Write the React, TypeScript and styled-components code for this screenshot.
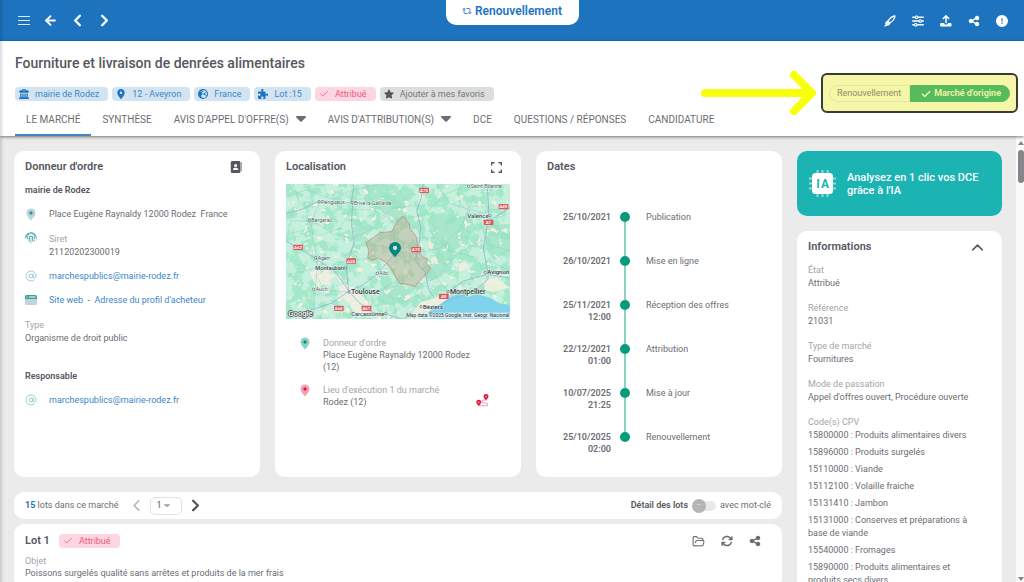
import React from "react";
import styled, { createGlobalStyle } from "styled-components";
import {
  FaAddressBook,
  FaArrowsRotate,
  FaBuildingColumns,
  FaCheck,
  FaCircleExclamation,
  FaEarthEurope,
  FaLocationDot,
  FaPuzzlePiece,
  FaShareNodes,
  FaSliders,
  FaStar,
} from "react-icons/fa6";
import { ArrowLeft, AtSign, Check, ChevronLeft, ChevronRight, ChevronUp, FolderOpen, Repeat2 } from "lucide-react";

const color = {
  blue: "#1e73be",
  link: "#3d85c6",
  text: "#6b6d72",
  strong: "#55575e",
  muted: "#a3a5a8",
  page: "#ebebeb",
  teal: "#1cb3b3",
  green: "#089a79",
};

const GlobalStyle = createGlobalStyle`
  *, *::before, *::after { box-sizing: border-box; }
  body { margin: 0; font-family: Roboto, "Liberation Sans", sans-serif; font-size: 9px; line-height: 13px; color: ${color.text}; }
  button, input, select { font: inherit; color: inherit; }
  button { border: 0; padding: 0; background: none; cursor: pointer; }
  h1, h2, h3, p, ul, ol, dl, dd { margin: 0; padding: 0; }
  ul, ol { list-style: none; }
  svg { display: block; flex: none; }
`;

const Shell = styled.div`
  height: 100vh;
  display: flex;
  flex-direction: column;
  overflow: hidden;
  background: ${color.page};
  &::before {
    content: "";
    position: fixed;
    inset: 0 auto 0 0;
    width: 4px;
    background: linear-gradient(90deg, rgba(0, 0, 0, 0.14), rgba(0, 0, 0, 0));
    z-index: 5;
  }
`;

const TopBar = styled.header`
  flex: none;
  display: grid;
  grid-template-columns: 1fr auto 1fr;
  height: 41px;
  padding: 0 15px 0 16px;
  background: ${color.blue};
  color: #fff;
`;

const IconGroup = styled.div<{ $end?: boolean }>`
  display: flex;
  align-items: center;
  gap: ${(p) => (p.$end ? 13 : 12)}px;
  justify-content: ${(p) => (p.$end ? "flex-end" : "flex-start")};
`;

const IconButton = styled.button<{ $dim?: boolean }>`
  display: flex;
  align-items: center;
  justify-content: center;
  width: 15px;
  height: 16px;
  color: ${(p) => (p.$dim ? "#b3b4b7" : "inherit")};
`;

const ModeTab = styled.div`
  align-self: start;
  display: flex;
  align-items: center;
  gap: 3px;
  height: 25px;
  padding: 0 17px 3px 16px;
  border-radius: 0 0 10px 10px;
  background: #fff;
  color: ${color.blue};
  font-size: 12px;
  font-weight: 600;
`;

const Heading = styled.section`
  flex: none;
  position: relative;
  z-index: 2;
  padding: 14px 15px 0;
  background: #fff;
  box-shadow: 0 1px 3px rgba(0, 0, 0, 0.5);
`;

const Title = styled.h1`
  font-size: 14px;
  line-height: 16px;
  font-weight: 500;
  color: ${color.strong};
`;

const Chips = styled.ul`
  display: flex;
  gap: 4px;
  margin-top: 16px;
`;

const tones = {
  blue: ["#d2e4f2", "#3f86c6"],
  pink: ["#fcd6e0", "#ee5683"],
  grey: ["#dcdddd", "#75777b"],
};

const Chip = styled.span<{ $tone: keyof typeof tones }>`
  display: flex;
  align-items: center;
  gap: 6px;
  height: 14px;
  padding: 0 9px 0 4px;
  border-radius: 4px;
  background: ${(p) => tones[p.$tone][0]};
  color: ${(p) => tones[p.$tone][1]};
  white-space: nowrap;
`;

const Tabs = styled.nav`
  display: flex;
  gap: 22px;
  height: 35px;
`;

const Tab = styled.a<{ $active?: boolean }>`
  display: flex;
  align-items: center;
  gap: 7px;
  padding: 3px ${(p) => (p.$active ? 11 : 0)}px 0;
  margin-right: ${(p) => (p.$active ? -11 : 0)}px;
  border-bottom: 2px solid ${(p) => (p.$active ? "#4a86bd" : "transparent")};
  font-size: 10px;
  color: ${color.text};
  text-decoration: none;
  white-space: nowrap;
`;

const Callout = styled.div`
  position: absolute;
  top: 29px;
  right: 6px;
  display: flex;
  align-items: center;
  gap: 4px;
`;

const CalloutBox = styled.div`
  display: flex;
  padding: 10px 6px 9px;
  border: 2px solid #3b3b32;
  border-radius: 6px;
  background: #f5f6a8;
`;

const Segment = styled.button<{ $on?: boolean }>`
  display: flex;
  align-items: center;
  gap: 3px;
  height: 17px;
  padding: 0 ${(p) => (p.$on ? 8 : 8)}px 0 ${(p) => (p.$on ? 10 : 7)}px;
  border: 1px solid ${(p) => (p.$on ? "#56bb5c" : "#e6e79c")};
  border-radius: ${(p) => (p.$on ? "0 9px 9px 0" : "9px 0 0 9px")};
  background: ${(p) => (p.$on ? "#56bb5c" : "transparent")};
  color: ${(p) => (p.$on ? "#f3f7a9" : "#8e8e66")};
  font-weight: ${(p) => (p.$on ? 600 : 400)};
  white-space: nowrap;
`;

const Body = styled.div`
  flex: 1;
  min-height: 0;
  display: flex;
`;

const Content = styled.div`
  flex: 1;
  min-width: 0;
  display: grid;
  grid-template-columns: minmax(0, 1fr) 205px;
  align-items: start;
  gap: 15px;
  padding: 15px 14px;
  overflow: hidden;
`;

const Scroll = styled.div`
  flex: none;
  width: 8px;
  display: flex;
  flex-direction: column;
  align-items: center;
  justify-content: space-between;
  padding: 5px 0 1px 1px;
  background: #fafbfb;
`;

const Thumb = styled.div`
  width: 6px;
  height: 33px;
  margin-top: 5px;
  border-radius: 3px;
  background: #85868a;
`;

const Column = styled.div`
  display: flex;
  flex-direction: column;
  gap: 15px;
  min-width: 0;
`;

const CardRow = styled.div`
  display: grid;
  grid-template-columns: repeat(3, minmax(0, 1fr));
  gap: 15px;
`;

const Card = styled.section`
  padding: 9px 11px;
  border-radius: 10px;
  background: #fff;
`;

const CardHead = styled.div`
  display: flex;
  align-items: center;
  justify-content: space-between;
  height: 14px;
  padding-right: 6px;
  margin-bottom: 10px;
  color: ${color.strong};
`;

const CardTitle = styled.h2`
  font-size: 11px;
  line-height: 14px;
  font-weight: 600;
  color: ${color.strong};
`;

const Strong = styled.h3`
  font-size: 9px;
  line-height: 13px;
  font-weight: 600;
  color: ${color.strong};
`;

const Label = styled.span`
  display: block;
  color: ${color.muted};
`;

const Lines = styled.ul`
  display: flex;
  flex-direction: column;
  gap: 11px;
  margin: 11px 0;
  ${Label} {
    line-height: 14px;
  }
`;

const Line = styled.li`
  display: flex;
  gap: 12px;
  white-space: pre;
`;

const Link = styled.a`
  color: ${color.link};
  text-decoration: none;
`;

const TypeBlock = styled.p`
  margin: 12px 0 25px;
`;

const MapFrame = styled.div`
  margin-top: 8px;
  svg {
    width: 100%;
    height: auto;
  }
`;

const Places = styled.ul`
  display: flex;
  flex-direction: column;
  gap: 11px;
  margin: 18px 20px 0 13px;
  line-height: 12px;
`;

const Place = styled.li`
  display: flex;
  gap: 12px;
  > div {
    flex: 1;
    max-width: 162px;
  }
  > button {
    margin: auto 0 0 auto;
  }
`;

const Timeline = styled.ol`
  margin: 37px 0 13px 14px;
  line-height: 12px;
`;

const Step = styled.li`
  display: grid;
  grid-template-columns: 50px 10px 1fr;
  height: 44px;
  &:last-child {
    height: 24px;
  }
  time {
    text-align: right;
    font-weight: 600;
  }
`;

const Rail = styled.span`
  display: flex;
  flex-direction: column;
  align-items: center;
  margin-left: 9px;
  width: 10px;
  padding-top: 1px;
  &::before {
    content: "";
    flex: none;
    width: 10px;
    height: 10px;
    border-radius: 50%;
    background: ${color.green};
  }
  &::after {
    content: "";
    width: 2px;
    flex: 1;
    margin-bottom: -1px;
    background: #8bd0c0;
  }
  li:last-child > &::after {
    display: none;
  }
`;

const StepName = styled.span`
  padding-left: 25px;
`;

const AiButton = styled.button`
  display: flex;
  align-items: center;
  gap: 11px;
  height: 65px;
  padding: 0 12px;
  border-radius: 10px;
  background: ${color.teal};
  color: #fff;
  font-size: 11px;
  font-weight: 500;
  text-align: left;
`;

const Facts = styled.dl`
  display: flex;
  flex-direction: column;
  gap: 12px;
  dt {
    color: ${color.muted};
  }
  ul {
    padding-right: 10px;
  }
  li + li {
    margin-top: 4px;
  }
`;

const Lots = styled.div`
  display: flex;
  flex-direction: column;
  gap: 5px;
`;

const LotsBar = styled.div`
  display: flex;
  align-items: center;
  height: 27px;
  padding: 0 11px;
  border-radius: 10px;
  background: #fff;
  b {
    color: ${color.blue};
    font-weight: 700;
  }
`;

const Pager = styled.div`
  display: flex;
  align-items: center;
  gap: 6px;
  margin: 0 auto 0 11px;
  color: ${color.strong};
`;

const PageSelect = styled.label`
  display: grid;
  align-items: center;
  border: 1px solid #e0e1e2;
  border-radius: 5px;
  select,
  svg {
    grid-area: 1 / 1;
  }
  select {
    appearance: none;
    width: 30px;
    height: 16px;
    padding: 0 5px;
    border: 0;
    background: transparent;
  }
  svg {
    margin-left: 13px;
    color: #aeb0b3;
    pointer-events: none;
  }
`;

const Switch = styled.label`
  display: flex;
  align-items: center;
  gap: 4px;
  strong {
    font-weight: 600;
    color: ${color.strong};
  }
  input {
    appearance: none;
    display: flex;
    align-items: center;
    width: 24px;
    height: 10px;
    margin: 0;
    border-radius: 5px;
    background: linear-gradient(90deg, transparent 5px, #e8e9e9 5px);
  }
  input::before {
    content: "–";
    width: 14px;
    height: 14px;
    border-radius: 50%;
    background: #b4b6b6;
    color: #d6d8d8;
    text-align: center;
    line-height: 13px;
  }
`;

const LotHead = styled.div`
  display: flex;
  align-items: center;
  gap: 9px;
  margin-bottom: 6px;
`;

const LotText = styled.p`
  line-height: 12px;
`;

const LotActions = styled.div`
  display: flex;
  gap: 13px;
  margin: 0 9px 0 auto;
`;

const Caret = ({ size = 10 }: { size?: number }) => (
  <svg width={size} height={(size * 6) / 10} viewBox="0 0 10 6" fill="currentColor">
    <path d="M1 0h8c1 0 1.300 1 .7 1.600L5.700 5.600a1 1 0 0 1-1.400 0L.3 1.600C-.3 1 0 0 1 0z" />
  </svg>
);

const MenuIcon = () => (
  <svg width="12" height="12" viewBox="0 0 12 12" stroke="currentColor" strokeWidth="1" opacity=".85">
    <path d="M0 1.500h12M0 5.500h12M0 9.500h12" />
  </svg>
);

const RocketIcon = () => (
  <svg width="12" height="12" viewBox="0 0 24 24" fill="none" stroke="currentColor" strokeWidth="2.600" strokeLinejoin="round" strokeLinecap="round">
    <path d="M22 2c-6 1-10 4-13 9l-1 5 5-1c5-3 8-7 9-13z" />
    <path d="M8 11l-4 3-1 4 5-2M12 16l-2 4-5 1 3-5" fill="currentColor" strokeWidth="1.500" />
    <path d="M8 16l-6 6" />
  </svg>
);

const UploadIcon = () => (
  <svg width="12" height="12" viewBox="0 0 24 24" fill="none" stroke="currentColor" strokeWidth="3" strokeLinecap="round" strokeLinejoin="round">
    <path d="M12 15V2M6.500 7L12 1.800 17.500 7" />
    <path d="M2 17h6c0 2 2 3 4 3s4-1 4-3h6v5H2z" fill="currentColor" strokeWidth="2" />
  </svg>
);

const ExpandIcon = () => (
  <svg width="11" height="11" viewBox="0 0 11 11" fill="none" stroke="currentColor" strokeWidth="1.400">
    <path d="M.7 3.500V.7h2.800M7.500.7h2.800v2.800M10.300 7.500v2.800H7.500M3.500 10.300H.7V7.500" />
  </svg>
);

const PinIcon = ({ tint, dot }: { tint: string; dot: string }) => (
  <svg width="12" height="13" viewBox="0 0 12 13">
    <path d="M6 .5a4.500 4.500 0 0 1 4.500 4.500C10.500 7.500 8 10 6 12.500 4 10 1.500 7.500 1.500 5A4.500 4.500 0 0 1 6 .5z" fill={tint} />
    <circle cx="6" cy="5" r="1.700" fill={dot} />
  </svg>
);

const FingerprintIcon = () => (
  <svg width="12" height="13" viewBox="0 0 24 26" fill="none" strokeLinecap="round" strokeWidth="2.200">
    <path d="M1.500 12a11 11 0 0 1 6-9.500M10 1.700c7-1 12.500 4 12.500 10.300" stroke="#45a7a5" />
    <path d="M5 14v-3a7 7 0 0 1 14-1v3" stroke="#7fbfc3" />
    <path d="M8.500 18v-6a3.500 3.500 0 0 1 7 0v6" stroke="#45a7a5" />
    <path d="M12 12v10M19 18v-2M22.500 16v-1" stroke="#9dcdd3" />
  </svg>
);

const BrowserIcon = () => (
  <svg width="12" height="12" viewBox="0 0 12 12">
    <path d="M0 5h12v4.500a1.500 1.500 0 0 1-1.500 1.500h-9A1.500 1.500 0 0 1 0 9.500z" fill="#c1d4dc" />
    <path d="M1.500 1h9A1.500 1.500 0 0 1 12 2.500V5H0V2.500A1.500 1.500 0 0 1 1.500 1z" fill="#3fa19c" />
    <path d="M1.500 3h1M4 3h6.500" stroke="#fff" strokeWidth="1" />
  </svg>
);

const RouteIcon = () => (
  <svg width="13" height="13" viewBox="0 0 26 26">
    <path d="M20 12h-5a3 3 0 0 0 0 6h6a2.800 2.800 0 0 1 0 5.500H6" fill="none" stroke="#f1a3b4" strokeWidth="2.200" />
    <path d="M20 0a5 5 0 0 1 5 5c0 3-3.500 5.500-5 8-1.500-2.500-5-5-5-8a5 5 0 0 1 5-5zM5.500 11.500a5 5 0 0 1 5 5c0 3-3.500 5.500-5 8-1.500-2.500-5-5-5-8a5 5 0 0 1 5-5z" fill="#e01f45" />
    <circle cx="20" cy="5.200" r="1.400" fill="#fbd5dc" />
    <circle cx="5.500" cy="16.700" r="1.400" fill="#fbd5dc" />
  </svg>
);

const ChipIcon = () => (
  <svg width="27" height="27" viewBox="0 0 27 27">
    <path d="M8.500 0v27M13.500 0v27M18.500 0v27M0 8.500h27M0 13.500h27M0 18.500h27" stroke="#8fd9d9" strokeWidth="2" />
    <rect x="3" y="3" width="21" height="21" rx="3.500" fill="#fff" />
    <g fontFamily="Roboto, sans-serif" fontWeight="700" fontSize="12" textAnchor="middle" fill={color.teal}>
      <text x="9" y="17.500">I</text>
      <text x="16" y="17.500">A</text>
    </g>
  </svg>
);

const ArrowIcon = () => (
  <svg width="117" height="46" viewBox="0 0 117 46" fill="none" stroke="#f7ff0a" strokeWidth="8" strokeLinecap="round" strokeLinejoin="round">
    <path d="M5 23h106M94 5l18 18-18 18" />
  </svg>
);

const towns: [string, number, number, number, boolean][] = [
  ["Saint-Etienne", 602, 142, 16, false],
  ["Périgueux", 153, 188, 16, false],
  ["Brive-la-Gaillarde", 252, 191, 15, false],
  ["Bergerac", 124, 244, 16, false],
  ["Agen", 143, 356, 16, false],
  ["Albi", 328, 403, 16, false],
  ["Auch", 137, 451, 16, false],
  ["Avignon", 652, 400, 18, true],
  ["Toulouse", 243, 459, 21, true],
  ["Montpellier", 540, 458, 21, true],
  ["Béziers", 459, 503, 18, true],
];

const townsBefore: [string, number, number, number][] = [
  ["Valence", 656, 230, 18],
  ["Montauban", 222, 387, 17],
  ["Carcassonne", 343, 524, 17],
];

const shields: [string, number, number][] = [
  ["A75", 462, 148],
  ["A49", 700, 197],
  ["A7", 655, 244],
  ["A62", 84, 319],
  ["A75", 438, 326],
  ["A20", 243, 360],
  ["A9", 521, 466],
  ["A64", 206, 502],
  ["A61", 289, 502],
];

const RegionMap = () => (
  <svg viewBox="48 129 672 405" role="img" aria-label="Carte de l'Aveyron" fontFamily="Roboto, sans-serif">
    <defs>
      <filter id="wood" x="0" y="0" width="100%" height="100%" colorInterpolationFilters="sRGB">
        <feTurbulence type="fractalNoise" baseFrequency="0.03" numOctaves="4" seed="12" />
        <feColorMatrix values="0 0 0 0 0.64  0 0 0 0 0.91  0 0 0 0 0.79  9 0 0 0 -4.200" />
      </filter>
      <filter id="field" x="0" y="0" width="100%" height="100%" colorInterpolationFilters="sRGB">
        <feTurbulence type="fractalNoise" baseFrequency="0.05" numOctaves="3" seed="31" />
        <feColorMatrix values="0 0 0 0 0.95  0 0 0 0 0.94  0 0 0 0 0.88  0 14 0 0 -9.400" />
      </filter>
    </defs>
    <rect x="48" y="129" width="672" height="405" fill="#c6f0de" />
    <rect x="48" y="129" width="672" height="405" filter="url(#wood)" />
    <g fill="#9ae3c3" opacity=".65">
      <path d="M245 235l20-6 25 11 15 30-12 10-8 15-32 10zM290 130l30 4 30-5 30 6 20 24 20 16-14 24 4 36-22 4-18 11-8-20-17-10-14-14-16-1-8-24-22-16zM470 235l20-16 40-4 30 12 40-2 20 40-22 20-6 26-30 10-32 44-24-6-8-16-22-20 10-40z" />
      <path d="M330 440l50-10 60 10-20 20-8 20-62 15-25-20zM640 260l26-10 54 0v90l-30 6-20 14-14-24-8-26zM500 350l40-10 10 30-40 40-30 10-20-16 24-20z" />
    </g>
    <rect x="48" y="129" width="672" height="405" filter="url(#field)" />
    <g fill="#f3f0e2" opacity=".85">
      <path d="M120 396l16-8 20 4 14-10 8 16 12 10-10 12 4 14-22-4-14 8-16-14zM205 440l18-14 14 10 20 4 16 20 18 20 12 30-12 10-18 2-25-14-10-20-18-16zM480 350l15-5 10 15-20 10zM477 300l14 8-4 18-12-8zM565 372l10-8 14 2 10 8-16 12-14 6zM450 484l50-14 25-15 30-10-20 24-20 16-45 25-40 5zM636 420l24-6 20-4 40 30-30 6-20 8-24-6z" />
    </g>
    <path d="M455 534l20-18 28-20 38-28 25-9 32 8 22-7 40 10 30 18 30 4v42z" fill="#7fd3ec" />
    <g fill="none" stroke="#5ebf9c" strokeWidth="2" strokeDasharray="5 3" opacity=".6">
      <path d="M48 280l60-14 40 18 60-20 36-60 70 6 60 30 90-20 60-60 50-20M150 534l20-70-30-60 60-40 90-12M440 290l60 0 40 40 80 20 30 60-20 60M70 129l20 60-40 50M560 129l10 60 60 50 20 70 70 20M380 534l-10-60-30-40" />
    </g>
    <g fill="none" stroke="#93b3cf" strokeWidth="3" strokeLinejoin="round" opacity=".8">
      <path d="M48 218l50-14 46-22 50 8 50-6 8-50M248 186l-4 60 8 60-20 60-2 24 6 60 30 34 40 30 50 8 60 18" />
      <path d="M48 300l40 22 50 32 60 40 38 56-50 36-90 30M460 129l-6 40-14 40 12 50-6 60-10 40 30 36 10 50 16 26M652 135l4 70-6 60-10 60 14 70 0 20-50 40-60 20-50 26-40 30" />
      <path d="M236 450l40-16 46-36 30-34 24-30M654 400l66 12M520 466l60-46 72-20M656 240l64-40" />
    </g>
    <g fill="none" stroke="#9fbfcf" strokeWidth="1.500" strokeLinejoin="round" opacity=".9">
      <path d="M48 170l60-24 80 30 60-30 90-17M60 240l70 0 60 40 58 12 60-30 60-60 80-10M60 400l80-20 60 10M137 445l60 6 40 0M130 534l6-90 6-80-20-120 28-60M300 534l10-70 60-40 70 14 60-30 60-70 80-40M330 200l40 50 4 80 60 10 80-20 60-60 40-100M560 534l-20-80-60-60M500 129l40 60 110 30M300 310l60 10 70 60M660 360l60 30M360 534l40-50 60-30" />
    </g>
    <path
      d="M400 225l8 8 2 8 8 7 2 15 10 12 10 15 2 20 3 20 13 18 14 5-4 12 14 17-12 18-12 8-8 10-15 19-20-7-25-2-15-23-13-25-17-18-20-10-20 6-12-8 4-20-9-25 22-15 20-15 35-3 15-27 12-15z"
      fill="#bd9d84"
      fillOpacity=".38"
      stroke="#c98e7f"
      strokeWidth="2.500"
    />
    {shields.map(([name, x, y], i) => (
      <g key={i}>
        <rect x={x - 14} y={y - 8} width="29" height="16" rx="2" fill="#e0575c" />
        <text x={x} y={y + 5} textAnchor="middle" fontSize="13" fontWeight="700" fill="#fff">
          {name}
        </text>
      </g>
    ))}
    <g stroke="#fff" strokeWidth="3" strokeOpacity=".7" paintOrder="stroke" strokeLinejoin="round">
      {towns.map(([name, x, y, size, big]) => (
        <text key={name} x={x} y={y} fontSize={size} fontWeight={big ? 500 : 400} fill={big ? "#33383b" : "#566164"}>
          {name}
        </text>
      ))}
      {townsBefore.map(([name, x, y, size]) => (
        <text key={name} x={x} y={y} textAnchor="end" fontSize={size} fontWeight="500" fill="#40484b">
          {name}
        </text>
      ))}
    </g>
    <g fill="#fff" stroke="#50595c" strokeWidth="2">
      {towns.map(([name, x, y]) => (
        <circle key={name} cx={x - 6} cy={y - 6} r="3.500" />
      ))}
      {townsBefore.map(([name, x, y]) => (
        <circle key={name} cx={x + 4} cy={y - 6} r="3.500" />
      ))}
    </g>
    <path d="M375 303a18 18 0 0 1 18 18c0 10-10 17-18 28-8-11-18-18-18-28a18 18 0 0 1 18-18z" fill="#0b8480" />
    <circle cx="375" cy="321" r="6.500" fill="#cbe8df" />
    <rect x="411" y="515" width="309" height="17" fill="#f4f7f6" fillOpacity=".75" />
    <text x="718" y="528" textAnchor="end" fontSize="15" fill="#333">
      Map data ©2025 Google, Inst. Geogr. Nacional
    </text>
    <text x="55" y="526" fontSize="23" fontWeight="500" fill="#fff" stroke="#555" strokeWidth="5" paintOrder="stroke" strokeLinejoin="round">
      Google
    </text>
  </svg>
);

const steps: [string, string, string][] = [
  ["25/10/2021", "", "Publication"],
  ["26/10/2021", "", "Mise en ligne"],
  ["25/11/2021", "12:00", "Réception des offres"],
  ["22/12/2021", "01:00", "Attribution"],
  ["10/07/2025", "21:25", "Mise à jour"],
  ["25/10/2025", "02:00", "Renouvellement"],
];

const facts: [string, string][] = [
  ["État", "Attribué"],
  ["Référence", "21031"],
  ["Type de marché", "Fournitures"],
  ["Mode de passation", "Appel d'offres ouvert, Procédure ouverte"],
];

const codes = [
  "15800000 : Produits alimentaires divers",
  "15896000 : Produits surgelés",
  "15110000 : Viande",
  "15112100 : Volaille fraiche",
  "15131410 : Jambon",
  "15131000 : Conserves et préparations à base de viande",
  "15540000 : Fromages",
  "15890000 : Produits alimentaires et produits secs divers",
];

const chips: [React.ReactNode, string, keyof typeof tones][] = [
  [<FaBuildingColumns size={10} color={color.blue} />, "mairie de Rodez", "blue"],
  [<FaLocationDot size={10} color={color.blue} />, "12 - Aveyron", "blue"],
  [<FaEarthEurope size={10} color={color.blue} />, "France", "blue"],
  [<FaPuzzlePiece size={10} color={color.blue} />, "Lot :15", "blue"],
  [<Check size={10} strokeWidth={2} />, "Attribué", "pink"],
  [<FaStar size={10} color="#55575e" />, "Ajouter à mes favoris", "grey"],
];

const Email = () => (
  <Line>
    <AtSign size={12} color="#9ccbd8" strokeWidth={2} />
    <Link href="mailto:marchespublics@mairie-rodez.fr">marchespublics@mairie-rodez.fr</Link>
  </Line>
);

export default function App() {
  return (
    <Shell>
      <GlobalStyle />
      <TopBar>
        <IconGroup>
          <IconButton aria-label="Menu"><MenuIcon /></IconButton>
          <IconButton aria-label="Retour"><ArrowLeft size={15} strokeWidth={3} /></IconButton>
          <IconButton aria-label="Précédent"><ChevronLeft size={19} strokeWidth={3} /></IconButton>
          <IconButton aria-label="Suivant"><ChevronRight size={19} strokeWidth={3} /></IconButton>
        </IconGroup>
        <ModeTab>
          <Repeat2 size={10} strokeWidth={2} />
          Renouvellement
        </ModeTab>
        <IconGroup $end>
          <IconButton aria-label="Assistant"><RocketIcon /></IconButton>
          <IconButton aria-label="Filtres"><FaSliders size={12} /></IconButton>
          <IconButton aria-label="Exporter"><UploadIcon /></IconButton>
          <IconButton aria-label="Partager"><FaShareNodes size={12} /></IconButton>
          <IconButton aria-label="Signaler"><FaCircleExclamation size={12} /></IconButton>
        </IconGroup>
      </TopBar>

      <Heading>
        <Title>Fourniture et livraison de denrées alimentaires</Title>
        <Chips>
          {chips.map(([icon, label, tone]) => (
            <li key={label}>
              <Chip $tone={tone}>{icon}{label}</Chip>
            </li>
          ))}
        </Chips>
        <Tabs>
          <Tab href="#marche" $active>LE MARCHÉ</Tab>
          <Tab href="#synthese">SYNTHÈSE</Tab>
          <Tab href="#appel">AVIS D'APPEL D'OFFRE(S) <Caret /></Tab>
          <Tab href="#attribution">AVIS D'ATTRIBUTION(S) <Caret /></Tab>
          <Tab href="#dce">DCE</Tab>
          <Tab href="#questions">QUESTIONS / RÉPONSES</Tab>
          <Tab href="#candidature">CANDIDATURE</Tab>
        </Tabs>
        <Callout>
          <ArrowIcon />
          <CalloutBox>
            <Segment>Renouvellement</Segment>
            <Segment $on><FaCheck size={10} />Marché d'origine</Segment>
          </CalloutBox>
        </Callout>
      </Heading>

      <Body>
        <Content>
          <Column>
            <CardRow>
              <Card>
                <CardHead>
                  <CardTitle>Donneur d'ordre</CardTitle>
                  <IconButton aria-label="Contacts"><FaAddressBook size={12} /></IconButton>
                </CardHead>
                <Strong>mairie de Rodez</Strong>
                <Lines>
                  <Line><PinIcon tint="#bcd3db" dot="#2c9c93" /><span>Place Eugène Raynaldy 12000 Rodez  France</span></Line>
                  <Line><FingerprintIcon /><span><Label>Siret</Label>21120202300019</span></Line>
                  <Email />
                  <Line>
                    <BrowserIcon />
                    <span><Link href="#site">Site web</Link>  -  <Link href="#profil">Adresse du profil d'acheteur</Link></span>
                  </Line>
                </Lines>
                <TypeBlock><Label>Type</Label>Organisme de droit public</TypeBlock>
                <Strong>Responsable</Strong>
                <Lines><Email /></Lines>
              </Card>

              <Card>
                <CardHead>
                  <CardTitle>Localisation</CardTitle>
                  <IconButton aria-label="Agrandir"><ExpandIcon /></IconButton>
                </CardHead>
                <MapFrame><RegionMap /></MapFrame>
                <Places>
                  <Place>
                    <PinIcon tint="#8fd0c8" dot="#0c8f7f" />
                    <div><Label>Donneur d'ordre</Label>Place Eugène Raynaldy 12000 Rodez (12)</div>
                  </Place>
                  <Place>
                    <PinIcon tint="#f4a3b2" dot="#dc1f47" />
                    <div><Label>Lieu d'exécution 1 du marché</Label>Rodez (12)</div>
                    <IconButton aria-label="Itinéraire"><RouteIcon /></IconButton>
                  </Place>
                </Places>
              </Card>

              <Card>
                <CardHead><CardTitle>Dates</CardTitle></CardHead>
                <Timeline>
                  {steps.map(([date, hour, name]) => (
                    <Step key={name}>
                      <time>{date} {hour}</time>
                      <Rail />
                      <StepName>{name}</StepName>
                    </Step>
                  ))}
                </Timeline>
              </Card>
            </CardRow>

            <Lots>
              <LotsBar>
                <span><b>15</b> lots dans ce marché</span>
                <Pager>
                  <IconButton $dim aria-label="Lots précédents"><ChevronLeft size={19} strokeWidth={2} /></IconButton>
                  <PageSelect>
                    <select aria-label="Page" defaultValue="1"><option>1</option><option>2</option></select>
                    <Caret size={6} />
                  </PageSelect>
                  <IconButton aria-label="Lots suivants"><ChevronRight size={19} strokeWidth={3} /></IconButton>
                </Pager>
                <Switch>
                  <strong>Détail des lots</strong>
                  <input type="checkbox" />
                  avec mot-clé
                </Switch>
              </LotsBar>
              <Card>
                <LotHead>
                  <CardTitle>Lot 1</CardTitle>
                  <Chip $tone="pink"><Check size={10} strokeWidth={2} />Attribué</Chip>
                  <LotActions>
                    <IconButton aria-label="Ouvrir"><FolderOpen size={13} strokeWidth={2} /></IconButton>
                    <IconButton aria-label="Actualiser"><FaArrowsRotate size={12} /></IconButton>
                    <IconButton aria-label="Partager"><FaShareNodes size={12} /></IconButton>
                  </LotActions>
                </LotHead>
                <LotText><Label>Objet</Label>Poissons surgelés qualité sans arrêtes et produits de la mer frais</LotText>
              </Card>
            </Lots>
          </Column>

          <Column>
            <AiButton><ChipIcon /><span>Analysez en 1 clic vos DCE grâce à l'IA</span></AiButton>
            <Card>
              <CardHead>
                <CardTitle>Informations</CardTitle>
                <IconButton aria-label="Replier"><ChevronUp size={19} strokeWidth={2} /></IconButton>
              </CardHead>
              <Facts>
                {facts.map(([name, value]) => (
                  <div key={name}><dt>{name}</dt><dd>{value}</dd></div>
                ))}
                <div>
                  <dt>Code(s) CPV</dt>
                  <dd><ul>{codes.map((c) => <li key={c}>{c}</li>)}</ul></dd>
                </div>
              </Facts>
            </Card>
          </Column>
        </Content>
        <Scroll aria-hidden="true">
          <div>
            <svg width="6" height="4" viewBox="0 0 6 4" fill="#85868a"><path d="M0 4l3-4 3 4z" /></svg>
            <Thumb />
          </div>
          <svg width="6" height="4" viewBox="0 0 6 4" fill="#85868a"><path d="M0 0l3 4 3-4z" /></svg>
        </Scroll>
      </Body>
    </Shell>
  );
}
